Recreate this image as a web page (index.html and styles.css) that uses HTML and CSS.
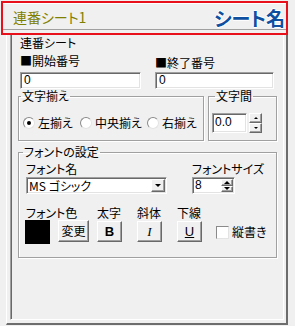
FILE: index.html
```html
<html>
<head>
 <meta charset="utf-8">
 <link rel="stylesheet" href="styles.css">
</head>
<body>
 <div class="head">
  <div class="head-bar">
   <span class="sheet-title">連番シート1</span>
   <span class="head-label">シート名</span>
  </div>
 </div>
 <div class="panel">
  <div class="panel-in">
   <div class="cap">連番シート</div>
   <div class="nums">
    <div class="num-col start">
     <div class="num-label">■開始番号</div>
     <div class="edit num">0</div>
    </div>
    <div class="num-col end">
     <div class="num-label">■終了番号</div>
     <div class="edit num">0</div>
    </div>
   </div>
   <div class="groups">
    <fieldset class="grp align">
     <legend>文字揃え</legend>
     <div class="radios">
      <div class="radio"><span class="dot on"></span>左揃え</div>
      <div class="radio"><span class="dot"></span>中央揃え</div>
      <div class="radio"><span class="dot"></span>右揃え</div>
     </div>
    </fieldset>
    <fieldset class="grp spacing">
     <legend>文字間</legend>
     <div class="spin-sep">
      <div class="edit num sp-edit">0.0</div>
      <div class="spin-btns small">
       <div class="sbtn"><span class="tri up"></span></div>
       <div class="sbtn"><span class="tri down"></span></div>
      </div>
     </div>
    </fieldset>
   </div>
   <fieldset class="grp font">
    <legend>フォントの設定</legend>
    <div class="font-top">
     <div class="name-col">
      <div>フォント名</div>
      <div class="combo">
       <div class="combo-text">MS ゴシック</div>
       <div class="combo-btn"><span class="tri down big"></span></div>
      </div>
     </div>
     <div class="size-col">
      <div class="size-label">フォントサイズ</div>
      <div class="spin-box">
       <div class="spin-text num">8</div>
       <div class="spin-btns">
        <div class="sbtn"><span class="tri up big"></span></div>
        <div class="sbtn"><span class="tri down big"></span></div>
       </div>
      </div>
     </div>
    </div>
    <div class="font-bottom">
     <div class="lbl first">フォント色</div>
     <div class="lbl">太字</div>
     <div class="lbl">斜体</div>
     <div class="lbl">下線</div>
     <div></div>
     <div class="color-cell">
      <div class="swatch"></div>
      <div class="btn change">変更</div>
     </div>
     <div class="btn style b">B</div>
     <div class="btn style i">I</div>
     <div class="btn style u">U</div>
     <div class="check"><span class="box"></span>縦書き</div>
    </div>
   </fieldset>
  </div>
 </div>
</body>
</html>
```

FILE: styles.css
```css
body {
 margin: 0;
 width: 295px;
 height: 326px;
 overflow: hidden;
 background: #f0f0f0;
 color: #000;
 font: 12px/14px "Noto Sans CJK JP", sans-serif;
 font-feature-settings: "palt";
}
.head {
 margin: 1px 0 0 1px;
 width: 287px;
 height: 34px;
 box-sizing: border-box;
 border: 2px solid #e8101a;
}
.head-bar {
 height: 27px;
 box-sizing: border-box;
 border-top: 1px solid #fff;
 border-bottom: 1px solid #a0a0a0;
 display: flex;
 align-items: center;
 justify-content: space-between;
 padding: 0 1px 0 10px;
}
.sheet-title {
 color: #808000;
 font-size: 14px;
}
.head-label {
 color: #0f4f9f;
 font-size: 19px;
 font-weight: bold;
 margin-top: 3px;
 text-shadow: 1px 0 #fff, -1px 0 #fff, 0 1px #fff, 0 -1px #fff;
}

/* main frame */
.panel {
 margin-left: 6px;
 width: 282px;
 height: 290px;
 box-sizing: border-box;
 border-left: 1px solid #fff;
 border-right: 2px solid #6d6d6d;
 border-bottom: 2px solid #6d6d6d;
 padding: 0 2px 3px 3px;
}
.panel-in {
 height: 100%;
 box-sizing: border-box;
 border-left: 1px solid #a0a0a0;
 box-shadow: inset 1px 0 #696969;
 border-right: 1px solid #fff;
 border-bottom: 1px solid #fff;
 padding: 1px 0 0 7px;
}
.cap {
 margin-left: 2px;
}
.nums {
 display: flex;
 margin-top: 4px;
 gap: 14px;
}
.num-col.start {
 margin-left: 2px;
 width: 121px;
}
.num-col.end {
 width: 119px;
}
.num-label {
 margin-bottom: 4px;
}
.end .num-label {
 padding-top: 2px;
 margin-bottom: 2px;
}
.num {
 font-family: "Liberation Sans", sans-serif;
}
.edit {
 height: 17px;
 box-sizing: border-box;
 background: #fff;
 border: 1px solid;
 border-color: #a0a0a0 #fff #fff #a0a0a0;
 box-shadow: inset 1px 1px #696969, inset -1px -1px #e3e3e3;
 padding-left: 3px;
 line-height: 14px;
}

/* group boxes */
.groups {
 display: flex;
 gap: 4px;
}
.grp {
 margin: 0;
 padding: 0;
 min-width: 0;
 box-sizing: border-box;
 border: 1px solid #a0a0a0;
 box-shadow: inset 1px 1px #fff, 1px 1px #fff;
}
.grp legend {
 padding: 0 1px;
 margin-left: 2px;
 line-height: 14px;
}
.align {
 width: 186px;
 height: 52px;
}
.spacing {
 width: 69px;
 height: 52px;
}
.spacing legend {
 margin-left: 6px;
}
.radios {
 display: grid;
 grid-template-columns: 57px 67px auto;
 margin: 13px 0 0 4px;
}
.radio {
 display: flex;
 align-items: center;
 gap: 3px;
}
.dot {
 width: 12px;
 height: 12px;
 box-sizing: border-box;
 border-radius: 50%;
 background: #fff;
 border: 1px solid;
 border-color: #8a8a8a #e3e3e3 #e3e3e3 #8a8a8a;
 display: flex;
 align-items: center;
 justify-content: center;
}
.dot.on::after {
 content: "";
 width: 4px;
 height: 4px;
 border-radius: 50%;
 background: #000;
}
.spin-sep {
 display: flex;
 gap: 2px;
 margin: 10px 0 0 3px;
}
.sp-edit {
 width: 35px;
 height: 20px;
 line-height: 16px;
 padding-left: 2px;
}
.spin-btns {
 display: flex;
 flex-direction: column;
 width: 13px;
}
.sbtn {
 flex: 1;
 box-sizing: border-box;
 background: #f0f0f0;
 border: 1px solid;
 border-color: #fff #696969 #696969 #fff;
 box-shadow: inset -1px -1px #a0a0a0;
 display: flex;
 align-items: center;
 justify-content: center;
}
.tri {
 width: 0;
 height: 0;
 border-left: 2px solid transparent;
 border-right: 2px solid transparent;
}
.tri.up {
 border-bottom: 2px solid #000;
}
.tri.down {
 border-top: 2px solid #000;
}
.tri.big {
 border-left-width: 3px;
 border-right-width: 3px;
}
.tri.up.big {
 border-bottom-width: 3px;
}
.tri.down.big {
 border-top-width: 3px;
}

/* font settings */
.font {
 margin-top: 4px;
 width: 259px;
 height: 113px;
}
.font legend {
 margin-left: 4px;
}
.font-top {
 display: flex;
 margin: 3px 0 0 7px;
}
.name-col {
 width: 166px;
}
.combo {
 display: flex;
 width: 141px;
 height: 17px;
 margin-top: 1px;
 box-sizing: border-box;
 background: #fff;
 border: 1px solid;
 border-color: #a0a0a0 #fff #fff #a0a0a0;
 box-shadow: inset 1px 1px #696969, inset -1px -1px #e3e3e3;
 padding: 1px;
}
.combo-text {
 flex: 1;
 padding-left: 1px;
 line-height: 13px;
}
.combo-btn {
 width: 14px;
 box-sizing: border-box;
 background: #f0f0f0;
 border: 1px solid;
 border-color: #fff #696969 #696969 #fff;
 box-shadow: inset -1px -1px #a0a0a0;
 display: flex;
 align-items: center;
 justify-content: center;
}
.size-label {
 padding-top: 1px;
 margin-bottom: 2px;
 line-height: 12px;
}
.spin-box {
 display: flex;
 width: 43px;
 height: 17px;
 box-sizing: border-box;
 background: #fff;
 border: 1px solid;
 border-color: #a0a0a0 #fff #fff #a0a0a0;
 box-shadow: inset 1px 1px #696969, inset -1px -1px #e3e3e3;
 padding: 1px;
}
.spin-text {
 flex: 1;
 padding-left: 1px;
 line-height: 12px;
}
.spin-box .spin-btns {
 width: 12px;
}
.font-bottom {
 display: grid;
 grid-template-columns: 72px 40px 40px 39px auto;
 grid-template-rows: 14px 24px;
 margin: 12px 0 0 6px;
 align-items: start;
}
.lbl.first {
 padding-left: 1px;
}
.color-cell {
 display: flex;
 gap: 8px;
}
.swatch {
 width: 25px;
 height: 24px;
 background: #000;
}
.btn {
 box-sizing: border-box;
 height: 22px;
 background: #f0f0f0;
 border: 1px solid;
 border-color: #fff #696969 #696969 #fff;
 box-shadow: inset -1px -1px #a0a0a0;
 display: flex;
 align-items: center;
 justify-content: center;
}
.change {
 width: 31px;
}
.style {
 width: 25px;
 height: 21px;
 margin-top: 1px;
 font-size: 13px;
 font-family: "Liberation Sans", sans-serif;
}
.b {
 font-weight: bold;
}
.i {
 font-family: "Liberation Serif", serif;
 font-style: italic;
}
.u {
 text-decoration: underline;
}
.check {
 display: flex;
 align-items: center;
 gap: 3px;
 align-self: center;
}
.box {
 width: 13px;
 height: 13px;
 box-sizing: border-box;
 background: #fff;
 border: 1px solid;
 border-color: #8a8a8a #e3e3e3 #e3e3e3 #8a8a8a;
}
```
